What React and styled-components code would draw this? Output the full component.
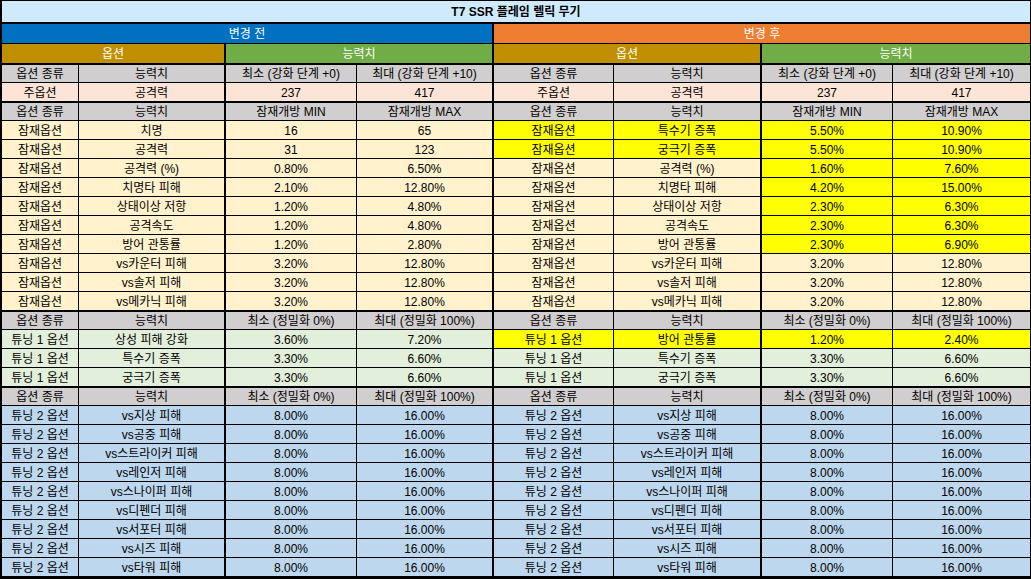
import React from 'react';
import styled, { createGlobalStyle } from 'styled-components';

const GlobalStyle = createGlobalStyle`
  html, body {
    margin: 0;
    padding: 0;
    background: #ffffff;
  }
  body {
    font-family: "Liberation Sans", "Noto Sans CJK KR", sans-serif;
    font-size: 12px;
    color: #000000;
  }
`;

// column widths include each cell's right border
const COLS = [77, 147, 131, 137, 120, 148, 131, 137];
const THICK = [1, 3, 5];

const C = {
  title: '#cfeafc',
  before: '#0070c0',
  after: '#ed7d31',
  gold: '#bf8f00',
  green: '#70ad47',
  head: '#d0cece',
  main: '#fce4d6',
  pot: '#fff2cc',
  hi: '#ffff00',
  tune1: '#e2efda',
  tune2: '#bdd7ee',
};

const Sheet = styled.div`
  display: grid;
  grid-template-columns: ${COLS.map((w) => `${w}px`).join(' ')};
  grid-template-rows: 21px 21px 20px;
  grid-auto-rows: 19px;
  width: 1031px;
  box-sizing: border-box;
  border-style: solid;
  border-color: #000;
  border-width: 1px 1px 3px 2px;
`;

const Cell = styled.div`
  grid-column: span ${(p) => p.$span || 1};
  box-sizing: border-box;
  display: flex;
  align-items: center;
  justify-content: center;
  white-space: nowrap;
  overflow: hidden;
  background: ${(p) => p.$bg};
  color: ${(p) => (p.$light ? '#ffffff' : '#000000')};
  font-weight: ${(p) => (p.$bold ? 700 : 400)};
  border-style: solid;
  border-color: #000;
  border-top-width: ${(p) => p.$top}px;
  border-right-width: ${(p) => p.$right}px;
  border-bottom-width: 0;
  border-left-width: 0;
  line-height: 1;
  padding-top: 1px;
`;

const rightOf = (lastCol) => (lastCol === 7 ? 0 : THICK.includes(lastCol) ? 2 : 1);

const HEAD_A = ['옵션 종류', '능력치', '최소 (강화 단계 +0)', '최대 (강화 단계 +10)'];
const HEAD_B = ['옵션 종류', '능력치', '잠재개방 MIN', '잠재개방 MAX'];
const HEAD_C = ['옵션 종류', '능력치', '최소 (정밀화 0%)', '최대 (정밀화 100%)'];

const potBefore = [
  ['치명', '16', '65'],
  ['공격력', '31', '123'],
  ['공격력 (%)', '0.80%', '6.50%'],
  ['치명타 피해', '2.10%', '12.80%'],
  ['상태이상 저항', '1.20%', '4.80%'],
  ['공격속도', '1.20%', '4.80%'],
  ['방어 관통률', '1.20%', '2.80%'],
  ['vs카운터 피해', '3.20%', '12.80%'],
  ['vs솔저 피해', '3.20%', '12.80%'],
  ['vs메카닉 피해', '3.20%', '12.80%'],
];

// hl: 'all' = whole row yellow, 'val' = only the numbers
const potAfter = [
  ['특수기 증폭', '5.50%', '10.90%', 'all'],
  ['궁극기 증폭', '5.50%', '10.90%', 'all'],
  ['공격력 (%)', '1.60%', '7.60%', 'val'],
  ['치명타 피해', '4.20%', '15.00%', 'val'],
  ['상태이상 저항', '2.30%', '6.30%', 'val'],
  ['공격속도', '2.30%', '6.30%', 'val'],
  ['방어 관통률', '2.30%', '6.90%', 'val'],
  ['vs카운터 피해', '3.20%', '12.80%'],
  ['vs솔저 피해', '3.20%', '12.80%'],
  ['vs메카닉 피해', '3.20%', '12.80%'],
];

const tuneBefore = [
  ['상성 피해 강화', '3.60%', '7.20%'],
  ['특수기 증폭', '3.30%', '6.60%'],
  ['궁극기 증폭', '3.30%', '6.60%'],
];

const tuneAfter = [
  ['방어 관통률', '1.20%', '2.40%', 'all'],
  ['특수기 증폭', '3.30%', '6.60%'],
  ['궁극기 증폭', '3.30%', '6.60%'],
];

const tune2 = ['vs지상 피해', 'vs공중 피해', 'vs스트라이커 피해', 'vs레인저 피해', 'vs스나이퍼 피해', 'vs디펜더 피해', 'vs서포터 피해', 'vs시즈 피해', 'vs타워 피해'].map(
  (n) => [n, '8.00%', '16.00%']
);

function sideCells(label, row, bg) {
  const [name, min, max, hl] = row;
  const labelBg = hl === 'all' ? C.hi : bg;
  const valBg = hl ? C.hi : bg;
  return [
    { text: label, bg: labelBg },
    { text: name, bg: labelBg },
    { text: min, bg: valBg },
    { text: max, bg: valBg },
  ];
}

function Row({ cells, top = 1 }) {
  return cells.map((c, i) => (
    <Cell key={i} $bg={c.bg} $top={top} $right={rightOf(i)}>
      {c.text}
    </Cell>
  ));
}

function HeaderRow({ labels }) {
  const cells = [...labels, ...labels].map((text) => ({ text, bg: C.head }));
  return <Row cells={cells} top={2} />;
}

function DataRows({ label, before, after, bg }) {
  return before.map((row, r) => (
    <Row key={r} cells={[...sideCells(label, row, bg), ...sideCells(label, after[r], bg)]} />
  ));
}

const MAIN = ['공격력', '237', '417'];

export default function App() {
  return (
    <>
      <GlobalStyle />
      <Sheet>
        <Cell $span={8} $bg={C.title} $top={0} $right={0} $bold>
          T7 SSR 플레임 렐릭 무기
        </Cell>

        <Cell $span={4} $bg={C.before} $top={2} $right={rightOf(3)} $light>변경 전</Cell>
        <Cell $span={4} $bg={C.after} $top={2} $right={rightOf(7)} $light>변경 후</Cell>

        <Cell $span={2} $bg={C.gold} $top={1} $right={rightOf(1)} $light>옵션</Cell>
        <Cell $span={2} $bg={C.green} $top={1} $right={rightOf(3)} $light>능력치</Cell>
        <Cell $span={2} $bg={C.gold} $top={1} $right={rightOf(5)} $light>옵션</Cell>
        <Cell $span={2} $bg={C.green} $top={1} $right={rightOf(7)} $light>능력치</Cell>

        <HeaderRow labels={HEAD_A} />
        <Row cells={[...sideCells('주옵션', MAIN, C.main), ...sideCells('주옵션', MAIN, C.main)]} />

        <HeaderRow labels={HEAD_B} />
        <DataRows label="잠재옵션" before={potBefore} after={potAfter} bg={C.pot} />

        <HeaderRow labels={HEAD_C} />
        <DataRows label="튜닝 1 옵션" before={tuneBefore} after={tuneAfter} bg={C.tune1} />

        <HeaderRow labels={HEAD_C} />
        <DataRows label="튜닝 2 옵션" before={tune2} after={tune2} bg={C.tune2} />
      </Sheet>
    </>
  );
}
